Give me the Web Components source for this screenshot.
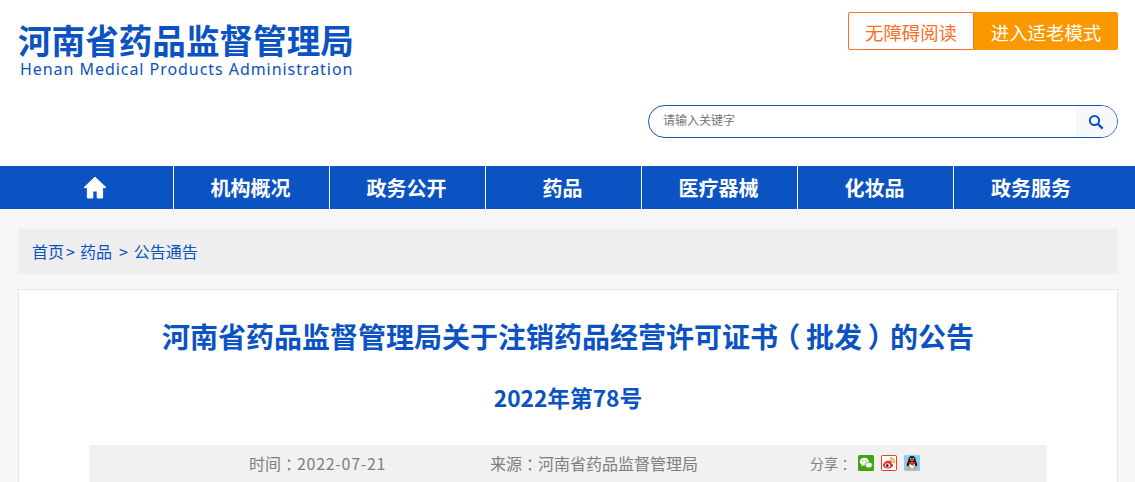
<!DOCTYPE html>
<html lang="zh-CN">
<head>
<meta charset="utf-8">
<title>河南省药品监督管理局</title>
<style>
  html, body { margin: 0; padding: 0; height: 482px; overflow: hidden; }
  body {
    background: #f6f8f8;
    font-family: "Noto Sans CJK SC", "Liberation Sans", sans-serif;
  }
</style>
</head>
<body>
<site-header></site-header>
<main-nav>
  <nav-item home></nav-item>
  <nav-item>机构概况</nav-item>
  <nav-item>政务公开</nav-item>
  <nav-item>药品</nav-item>
  <nav-item>医疗器械</nav-item>
  <nav-item>化妆品</nav-item>
  <nav-item>政务服务</nav-item>
</main-nav>
<bread-crumb></bread-crumb>
<article-card sub-text="2022年第78号">
  河南省药品监督管理局关于注销药品经营许可证书<i>（</i>批发<i>）</i>的公告
  <share-bar slot="meta" date="2022-07-21" source="河南省药品监督管理局"></share-bar>
</article-card>

<script>
class SiteHeader extends HTMLElement {
  constructor() {
    super();
    this.attachShadow({ mode: "open" });
  }
  connectedCallback() {
    this.shadowRoot.innerHTML = `
      <style>
        :host {
          display: flex;
          justify-content: space-between;
          height: 166px;
          padding: 0 17px 0 18px;
          background: #fff;
        }
        .logo { padding-top: 20px; color: #0b52c2; }
        .cn {
          font-size: 33.6px;
          font-weight: 700;
          line-height: 39px;
          white-space: nowrap;
        }
        .en {
          font-family: "Noto Sans", sans-serif;
          font-size: 16px;
          line-height: 18px;
          letter-spacing: .95px;
          padding-left: 2px;
          padding-top: 1px;
          white-space: nowrap;
        }
        .right {
          display: flex;
          flex-direction: column;
          align-items: flex-end;
          padding-top: 12px;
          gap: 55px;
        }
        .btns { display: flex; height: 38px; font-size: 18.4px; line-height: 40px; }
        .btns span {
          box-sizing: border-box;
          text-align: center;
        }
        .plain {
          width: 126px;
          border: 1px solid #fb6f1f;
          border-radius: 2px 0 0 2px;
          color: #fb6f1f;
          background: #fff;
          line-height: 38px;
        }
        .orange {
          width: 144px;
          background: #fb9800;
          border-radius: 0 2px 2px 0;
          color: #fff;
        }
        .search {
          box-sizing: border-box;
          width: 470px;
          height: 33px;
          display: flex;
          border: 1px solid #0b52c2;
          border-radius: 17px;
          overflow: hidden;
          background: #fff;
        }
        .hint {
          flex: 1;
          padding-left: 14px;
          font-size: 12px;
          line-height: 28px;
          color: #757575;
        }
        .go {
          width: 41px;
          display: flex;
          align-items: center;
          justify-content: center;
          padding-right: 2px;
          box-sizing: border-box;
          background: #f7f8fa;
        }
      </style>
      <div class="logo">
        <div class="cn">河南省药品监督管理局</div>
        <div class="en">Henan Medical Products Administration</div>
      </div>
      <div class="right">
        <div class="btns">
          <span class="plain">无障碍阅读</span>
          <span class="orange">进入适老模式</span>
        </div>
        <div class="search">
          <span class="hint">请输入关键字</span>
          <span class="go">
            <svg width="16" height="16" viewBox="0 0 16 16" fill="none" stroke="#0b52c2">
              <circle cx="6.5" cy="6.5" r="4.6" stroke-width="2"/>
              <path d="M10 10l4.6 4.6" stroke-width="2.4"/>
            </svg>
          </span>
        </div>
      </div>
    `;
  }
}

class MainNav extends HTMLElement {
  constructor() {
    super();
    this.attachShadow({ mode: "open" });
  }
  connectedCallback() {
    this.shadowRoot.innerHTML = `
      <style>
        :host {
          display: flex;
          height: 43px;
          padding-left: 18px;
          background: #0b52c2;
        }
      </style>
      <slot></slot>
    `;
  }
}

class NavItem extends HTMLElement {
  constructor() {
    super();
    this.attachShadow({ mode: "open" });
  }
  connectedCallback() {
    const inner = this.hasAttribute("home")
      ? `<svg width="24" height="23" viewBox="0 0 24 23" fill="#fff" stroke="#fff" stroke-width="1" stroke-linejoin="round">
           <path d="M12 1L1 11.6h3.4V22h5.4v-7h4.4v7h5.4V11.6H23z"/>
         </svg>`
      : `<slot></slot>`;
    this.shadowRoot.innerHTML = `
      <style>
        :host {
          box-sizing: border-box;
          display: flex;
          align-items: center;
          justify-content: center;
          width: 156px;
          padding-right: 2px;
          border-right: 1px solid #fff;
          color: #fff;
          font-size: 20px;
          font-weight: 700;
        }
        :host(:last-child) { border-right: 0; }
      </style>
      ${inner}
    `;
  }
}

class BreadCrumb extends HTMLElement {
  constructor() {
    super();
    this.attachShadow({ mode: "open" });
  }
  connectedCallback() {
    this.shadowRoot.innerHTML = `
      <style>
        :host {
          display: block;
          padding: 20px 17px 15px 18px;
        }
        div {
          display: flex;
          height: 45px;
          line-height: 44px;
          padding-left: 14px;
          background: #eee;
          color: #0b52c2;
          font-size: 16px;
          white-space: pre;
        }
        .a { margin-left: 2px; margin-right: 5px; }
        .b { margin-left: 7px; margin-right: 6px; }
      </style>
      <div><span>首页</span><span class="a">&gt;</span><span>药品</span><span class="b">&gt;</span><span>公告通告</span></div>
    `;
  }
}

class ArticleCard extends HTMLElement {
  constructor() {
    super();
    this.attachShadow({ mode: "open" });
  }
  connectedCallback() {
    this.shadowRoot.innerHTML = `
      <style>
        :host {
          display: block;
          padding: 0 17px 0 18px;
        }
        article {
          box-sizing: border-box;
          height: 240px;
          padding: 0 70px;
          background: #fff;
          border: 1px solid #e6e6e6;
        }
        h1, h2 {
          margin: 0;
          color: #0b52c2;
          text-align: center;
          font-weight: 700;
        }
        h1 { font-size: 28px; line-height: 40px; padding-top: 26px; }
        h2 { font-size: 22.7px; line-height: 32px; padding-top: 26px; padding-bottom: 31px; }
        /* full-width brackets sit centred in their cell in the original */
        ::slotted(i) {
          font-style: normal;
          display: inline-block;
          width: 1em;
          text-align: center;
          font-feature-settings: "palt";
        }
      </style>
      <article>
        <h1><slot></slot></h1>
        <h2>${this.getAttribute("sub-text")}</h2>
        <slot name="meta"></slot>
      </article>
    `;
  }
}

class ShareBar extends HTMLElement {
  constructor() {
    super();
    this.attachShadow({ mode: "open" });
  }
  connectedCallback() {
    this.shadowRoot.innerHTML = `
      <style>
        :host {
          display: grid;
          grid-template-columns: 241px 320px 48px auto;
          align-items: start;
          height: 60px;
          padding-left: 160px;
          background: #f1f1f1;
          color: #7f7f7f;
          font-size: 16px;
          line-height: 36px;
        }
        .colon {
          display: inline-block;
          width: 1em;
          text-align: center;
          font-feature-settings: "palt";
        }
        .num { letter-spacing: .7px; }
        .label { font-size: 14px; }
        .icons { display: flex; gap: 7px; padding-top: 10px; }
        svg { display: block; }
      </style>
      <span>时间<span class="colon">：</span><span class="num">${this.getAttribute("date")}</span></span>
      <span>来源<span class="colon">：</span>${this.getAttribute("source")}</span>
      <span class="label">分享<span class="colon">：</span></span>
      <span class="icons">
        <svg width="16" height="16" viewBox="0 0 16 16">
          <rect width="16" height="16" rx="1.5" fill="#3fa411"/>
          <ellipse cx="6.3" cy="6.6" rx="4.6" ry="3.8" fill="#fff"/>
          <path d="M4 9.500l-.6 2 2.200-1.200z" fill="#fff"/>
          <ellipse cx="10.800" cy="10" rx="3.600" ry="3" fill="#fff" stroke="#3fa411" stroke-width=".8"/>
          <circle cx="4.800" cy="5.600" r=".7" fill="#3fa411"/>
          <circle cx="7.800" cy="5.600" r=".7" fill="#3fa411"/>
        </svg>
        <svg width="16" height="16" viewBox="0 0 16 16">
          <rect x=".5" y=".5" width="15" height="15" rx="1" fill="#fff" stroke="#e2420f"/>
          <path d="M7.200 5.400C4.400 6 1.800 8.400 2 10.600c.2 2 2.600 3 5 2.900 2.600-.1 5-1.500 5-3.300 0-1-1-1.500-1.600-1.700.3-1 .3-1.800-.3-2.200-.5-.4-1.400-.3-2.900-.9z" fill="#e8323a"/>
          <ellipse cx="6.600" cy="10.400" rx="2.600" ry="2.100" fill="#fff"/>
          <circle cx="6.300" cy="10.600" r="1.400" fill="#222"/>
          <path d="M9 3a4.600 4.600 0 0 1 4.400 5.400" fill="none" stroke="#f09a1a" stroke-width="1.300"/>
          <path d="M9.200 5.300a2.200 2.200 0 0 1 2 2.600" fill="none" stroke="#f09a1a" stroke-width="1.100"/>
        </svg>
        <svg width="16" height="16" viewBox="0 0 16 16">
          <rect width="16" height="16" rx="1.5" fill="#8ecbf0"/>
          <path d="M8 1C5.400 1 4.400 3 4.300 5.400 3.400 7 2.400 9 2.800 11c.5.4 1 0 1.500-.6C4.600 12 5.600 13 8 13s3.400-1 3.700-2.600c.5.6 1 1 1.500.6.4-2-.6-4-1.500-5.600C11.600 3 10.600 1 8 1z" fill="#17171b"/>
          <ellipse cx="8" cy="10.300" rx="2.900" ry="3" fill="#fff"/>
          <path d="M4.300 7.200h7.400l-.6 1.700-1.500.4v1.700l-1.400-.8-3.400-1.300z" fill="#e02a1c"/>
          <path d="M6.400 5.600L8 4.800l1.600.8L8 6.600z" fill="#f5a81c"/>
          <circle cx="6.700" cy="3.700" r=".8" fill="#fff"/>
          <circle cx="9.300" cy="3.700" r=".8" fill="#fff"/>
          <path d="M3.600 13.200h3.600v1.800H3zM8.800 13.200h3.600l.6 1.800H8.800z" fill="#f5a81c"/>
        </svg>
      </span>
    `;
  }
}

customElements.define("site-header", SiteHeader);
customElements.define("main-nav", MainNav);
customElements.define("nav-item", NavItem);
customElements.define("bread-crumb", BreadCrumb);
customElements.define("article-card", ArticleCard);
customElements.define("share-bar", ShareBar);
</script>
</body>
</html>
